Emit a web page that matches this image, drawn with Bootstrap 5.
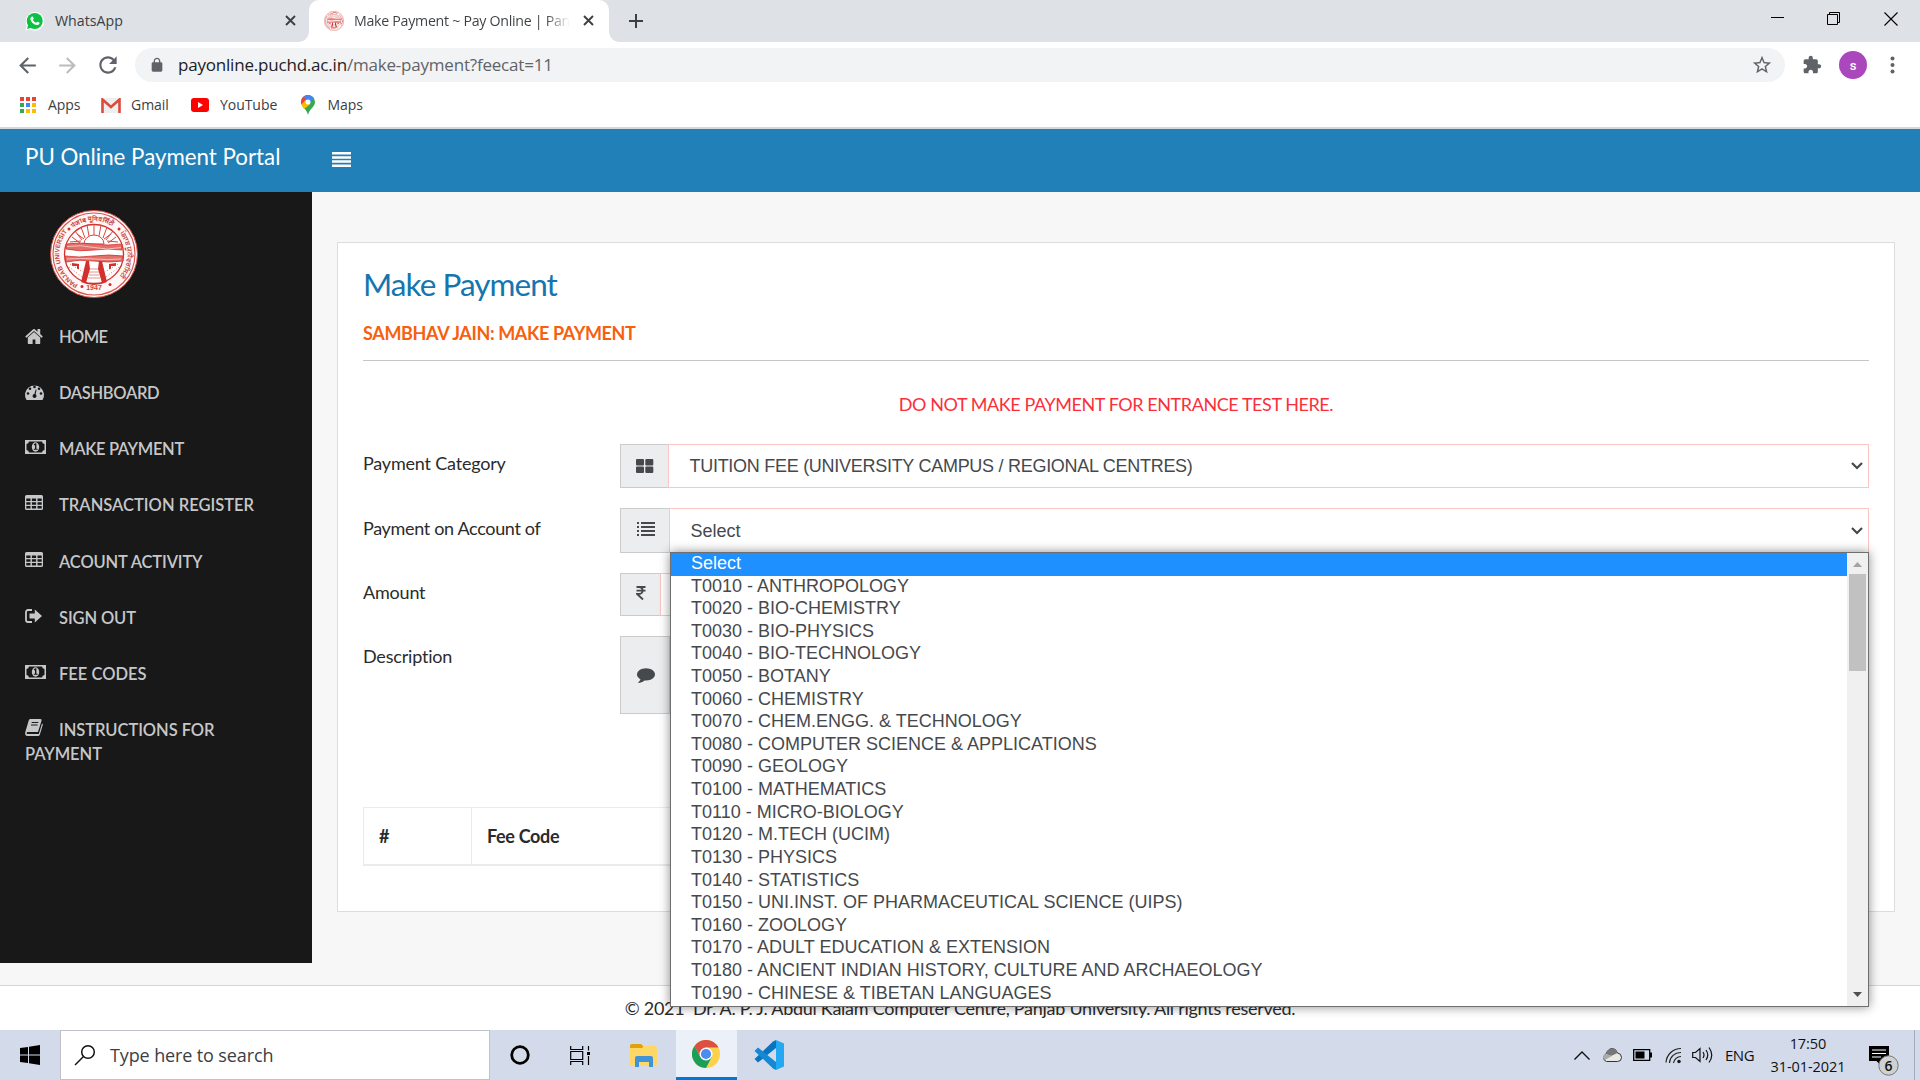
<!DOCTYPE html>
<html lang="en">
<head>
<meta charset="utf-8">
<title>Make Payment ~ Pay Online | Panjab University</title>
<link href="https://cdn.jsdelivr.net/npm/bootstrap@5.3.0/dist/css/bootstrap.min.css" rel="stylesheet">
<style>
html,body{width:1920px;height:1080px;overflow:hidden}
body{font-family:Lato,"Liberation Sans",sans-serif;font-size:18px;line-height:26px;color:#2b2b2b;background:#fff}
svg{display:block;flex:none}
.ui{font-family:"Open Sans","Noto Sans",sans-serif;color:#3c4043;white-space:nowrap}
.tabstrip{height:42px;background:#dee1e6}
.tab-idle{width:309px;padding:0 0 1px 25px;font-size:14.2px;letter-spacing:0}
.tab-live{width:300px;background:#fff;border-radius:10px 10px 0 0;padding:0 0 1px 15px;font-size:14.2px;letter-spacing:-.28px;position:relative}
.tab-live::before,.tab-live::after{content:"";position:absolute;bottom:0;width:10px;height:10px}
.tab-live::before{left:-10px;background:radial-gradient(circle at 0 0,transparent 9.5px,#fff 10px)}
.tab-live::after{right:-10px;background:radial-gradient(circle at 100% 0,transparent 9.5px,#fff 10px)}
.tab-title{width:218px;overflow:hidden;background:linear-gradient(90deg,#3c4043 88%,transparent 99%);-webkit-background-clip:text;background-clip:text;color:transparent}
.winctl{width:57px}
.toolbar{height:44px;padding-top:2px}
.omni{width:1650px;height:34px;border-radius:17px;background:#f1f3f4;font-size:17px;letter-spacing:-.2px;color:#5f6368;padding:0 12px 0 12px}
.omni b{font-weight:400;color:#202124}
.marks{height:43px;border-bottom:2px solid #d5d7da;font-size:14px;letter-spacing:-.05px;padding-bottom:3px}
.avatar{width:28px;height:28px;background:#ab47bc;color:#fff;font:500 13px Roboto,sans-serif}
.topbar{height:63px;background:#2180b8;color:#fff;padding:0 0 7px 25px}
.brand{width:307px;font-size:22.3px}
.mainrow{height:793px;background:#f7f7f7}
.side{width:312px;height:771px;background:#181818;padding-top:18px}
.seal{margin-left:50px;margin-bottom:26.5px}
.side a{display:block;color:#c6c7c9;text-decoration:none;font:600 16.5px/24px Lato,sans-serif;padding:0 25px;margin-bottom:32.25px;white-space:normal}
.side a svg{display:inline-block;vertical-align:-1px;margin-right:16px;fill:#c6c7c9;overflow:visible}
.side a:last-child{margin:0}
.side .tight{letter-spacing:-.33px}
.panel{width:1558px;height:670px;margin:50px 0 0 25px;border:1px solid #ddd;background:#fff;padding:21px 25px 0}
.panel h1{font-size:31.5px;line-height:40px;color:#1576ae;margin:0 0 18px;letter-spacing:-.95px;font-weight:400}
.panel h2{font-size:18px;line-height:22px;font-weight:700;color:#f6600f;margin:0;letter-spacing:-.36px}
.rule{border-top:1px solid #c6c6c6;margin-top:16px}
.warn{color:#fb2f3b;margin:30px 0 27px;letter-spacing:-.43px}
.lab{width:257px;padding-top:6px;letter-spacing:-.2px}
.frm{margin-bottom:20px}
.addon{border:1px solid #c9cbcd;background:#ecedef;width:49px;justify-content:center;padding-left:1px}
.fld{border:1px solid #fbc4c5;margin-left:-1px;font:18px "Liberation Sans",sans-serif;color:#46494c;padding:0 5px 0 20.5px;background:#fff}
.menu-pop{position:absolute;left:50px;top:44px;width:1199px;height:455px;border:1px solid #6f6f6f;background:#fff;box-shadow:0 0 10px rgba(0,0,0,.45);z-index:5;font:18px/22.6px "Liberation Sans",sans-serif;color:#46494c}
.menu-pop ul{margin:0;padding:0;list-style:none}
.menu-pop li{padding-left:20px;height:22.62px;line-height:20px;white-space:nowrap}
.menu-pop li.on{background:#1e90ff;color:#fff}
.sbar{width:21px;background:#f0f0f0}
.thumb{width:17px;height:97px;background:#c1c1c1}
.fees{border:1px solid #ebebeb;border-bottom-width:2px;height:59px;margin-top:93px;padding-bottom:1px;font-weight:700;letter-spacing:-.33px}
.fees .num{width:108px;height:58px;padding-left:15px;border-right:1px solid #ebebeb}
.foot{height:45px;border-top:1px solid #d3d5e2;background:#fff;padding-top:9px;letter-spacing:-.27px}
.taskbar{height:50px;background:#d3dbeb}
.find{width:430px;height:50px;background:#fff;border:1px solid #bfc2c8;font-size:18px;letter-spacing:-.12px;padding-left:13px}
.tile{width:60px}
.tile.on{background:#ecf0f8;border-bottom:3px solid #0078d7}
.tray{color:#111;font-size:15px}
</style>
</head>
<body class="d-flex flex-column">
<svg width="0" height="0" class="position-absolute"><defs>
<symbol id="cash" viewBox="0 0 21 14"><path fill-rule="evenodd" d="M0 0h21v14H0zM4 1.500A2.700 2.700 0 0 1 1.500 4v6A2.700 2.700 0 0 1 4 12.500h13A2.700 2.700 0 0 1 19.500 10V4A2.700 2.700 0 0 1 17 1.500z"/><ellipse cx="10.500" cy="7" rx="3.700" ry="4.700"/><path fill="#181818" d="M8.700 4.600l1.600-1.300h1.100v5.500h1.200v1H8.800v-1h1.200V5l-.7.600z"/></symbol>
<symbol id="grid" viewBox="0 0 18 15"><path fill-rule="evenodd" d="M1.500 0h15A1.500 1.500 0 0 1 18 1.500v12a1.500 1.500 0 0 1-1.500 1.500h-15A1.500 1.500 0 0 1 0 13.500v-12A1.500 1.500 0 0 1 1.500 0zM1.300 3.500v2.500h4.200V3.500zm5.600 0v2.500h4.200V3.500zm5.600 0v2.500h4.200V3.500zM1.300 7.300v2.500h4.200V7.300zm5.600 0v2.500h4.200V7.300zm5.600 0v2.500h4.200V7.300zM1.300 11.100v2.500h4.200v-2.500zm5.600 0v2.500h4.200v-2.500zm5.600 0v2.500h4.200v-2.500z"/></symbol>
<symbol id="cross" viewBox="0 0 11 11"><path d="M1 1l9 9M10 1l-9 9" stroke="#3c4043" stroke-width="1.900"/></symbol>
<symbol id="seal" viewBox="0 0 88 88">
<circle cx="44" cy="44" r="43.500" fill="#fff6f5" stroke="#cf4a45"/><circle cx="44" cy="44" r="41" fill="none" stroke="#d9534e" stroke-width="1.100"/><circle cx="44" cy="44" r="29.500" fill="#fff" stroke="#d3302b" stroke-width="1.300"/>
<g stroke="#d9453f" stroke-width="1" fill="none"><path d="M30 33l-8-6M32 30l-7-9M35 28l-4-11M39 26l-2-11M44 25V14M49 26l2-11M53 28l4-11M56 30l7-9M58 33l8-6M31 31l-11 1M57 31l11 1M34 29l-7-5M54 29l7-5"/></g>
<path d="M34 34a10 9 0 0 1 20 0z" fill="#fff" stroke="#d9453f"/>
<path d="M16 34q14-2 28 0t28 0v6q-14-2-28 0t-28-1zM15 46q14 2 29 0t29 0v5q-14 2-29 0t-28 1z" fill="#e2706b" stroke="#d3302b" stroke-width=".8"/><path d="M17 36.500q14-2 27 1t27 0M17 49q14-1 27 0t27 0" stroke="#f7c0bd" fill="none"/>
<path d="M36 51h3l1 8-4 14h16l-4-14 1-8h3l5 21q-13 6-26 0zM22 53l7 1v5h-2v-3h-5zM66 53l-7 1v5h2v-3h5z" fill="#d3302b"/><path d="M40 59h8M39 62h10M39 65h10M38 68h12" stroke="#dd8a85" stroke-width=".9"/><path d="M19 57l13 10M20 54l13 8M24 65l8 7M69 57l-13 10M68 54l-13 8M64 65l-8 7" stroke="#d9706b" stroke-dasharray="1 2"/>
<g font-family="Liberation Sans,sans-serif" font-weight="700" fill="#c8433e"><text x="44" y="80" font-size="7" text-anchor="middle">1947</text><text font-size="6.400"><textPath href="#ringL">PANJAB UNIVERSITY</textPath></text><text font-size="6.500"><textPath href="#ringT">पंजाब यूनिवर्सिटी</textPath></text><text font-size="6.500"><textPath href="#ringR">ਪੰਜਾਬ ਯੂਨੀਵਰਸਿਟੀ</textPath></text></g>
<circle cx="19" cy="19" r="1.500" fill="#d3302b"/><circle cx="69" cy="19" r="1.500" fill="#d3302b"/><circle cx="32" cy="76.500" r="1.500" fill="#d3302b"/><circle cx="60" cy="74.500" r="1.500" fill="#d3302b"/>
</symbol>
<path id="ringL" d="M28 74.500A34.500 34.500 0 0 1 17 22"/><path id="ringT" d="M23 18A33.500 33.500 0 0 1 66 19"/><path id="ringR" d="M70 23A34.500 34.500 0 0 1 64 72"/>
</defs></svg>

<header class="ui">
<div class="tabstrip d-flex">
 <div class="tab-idle d-flex align-items-center">
  <svg width="19" height="20" viewBox="0 0 19 20"><path d="M.4 19.500l1.300-4.900A9.300 9.300 0 1 1 5 18.200z" fill="#fff"/><circle cx="9.700" cy="10" r="8" fill="#0dc143"/><path d="M2 18l1.300-4.500 3.200 3.200z" fill="#0dc143"/><path d="M6.600 5.800c.6-.6 1.100-.4 1.300 0l.8 1.700c.1.500-.8 1.100-.7 1.400.7 1.400 1.700 2.200 3 2.800.5.100 1-1.100 1.500-1l1.800.9c.7.500-.2 2.500-2.100 2.500-3.500-.3-6.500-3.500-6.800-6.100 0-1 .5-1.600 1.200-2.200z" fill="#fff"/></svg>
  <span style="margin-left:11px">WhatsApp</span><svg class="ms-auto" width="11" height="11" style="margin-right:13.5px"><use href="#cross"/></svg>
 </div>
 <div class="tab-live d-flex align-items-center">
  <svg width="20" height="20"><use href="#seal"/></svg><span class="tab-title" style="margin-left:10px">Make Payment ~ Pay Online | Panjab</span><svg width="11" height="11" style="margin-left:11px"><use href="#cross"/></svg>
 </div>
 <svg style="margin:13px 0 0 19px" width="16" height="16"><path d="M8 1v14M1 8h14" stroke="#3c4043" stroke-width="2"/></svg>
 <div class="d-flex ms-auto" style="padding:0 1px 5px 0">
  <div class="winctl d-flex align-items-center justify-content-center"><svg width="14" height="14"><path d="M1 5.500h13" stroke="#000"/></svg></div>
  <div class="winctl d-flex align-items-center justify-content-center"><svg width="14" height="14" fill="none" stroke="#000"><path d="M.5 2.500h10v10H.5zM2.500 2.500v-2h10v10h-2"/></svg></div>
  <div class="winctl d-flex align-items-center justify-content-center"><svg width="14" height="14"><path d="M.5.500l13 13M13.500.500l-13 13" stroke="#000" stroke-width="1.100"/></svg></div>
 </div>
</div>
<div class="toolbar d-flex align-items-center">
 <svg style="margin-left:15px" width="25" height="25" viewBox="0 0 24 24" fill="#5f6368"><path d="M20 11H7.830l5.590-5.590L12 4l-8 8 8 8 1.410-1.410L7.830 13H20z"/></svg>
 <svg style="margin-left:15px" width="25" height="25" viewBox="0 0 24 24" fill="#babcbe"><path d="M4 11h12.170l-5.590-5.590L12 4l8 8-8 8-1.410-1.410L16.170 13H4z"/></svg>
 <svg style="margin-left:15px;margin-right:14px" width="26" height="26" viewBox="0 0 24 24" fill="#5f6368"><path d="M17.650 6.350C16.200 4.900 14.210 4 12 4c-4.420 0-7.990 3.580-7.990 8s3.570 8 7.990 8c3.730 0 6.840-2.550 7.730-6h-2.080c-.82 2.330-3.040 4-5.650 4-3.310 0-6-2.690-6-6s2.690-6 6-6c1.660 0 3.140.69 4.220 1.780L13 11h7V4l-2.350 2.350z"/></svg>
 <div class="omni d-flex align-items-center">
  <svg width="20" height="16" viewBox="0 0 24 24" fill="#5f6368"><path d="M18 8h-1V6c0-2.760-2.240-5-5-5S7 3.240 7 6v2H6c-1.100 0-2 .9-2 2v10c0 1.100.9 2 2 2h12c1.100 0 2-.9 2-2V10c0-1.100-.9-2-2-2zm-9-2c0-1.660 1.340-3 3-3s3 1.340 3 3v2H9V6z"/></svg>
  <span style="margin:0 0 1px 11px"><b>payonline.puchd.ac.in</b>/make-payment?feecat=11</span>
  <svg class="ms-auto" width="22" height="22" viewBox="0 0 24 24" fill="#5f6368"><path d="M22 9.240l-7.190-.62L12 2 9.190 8.630 2 9.240l5.460 4.730L5.820 21 12 17.270 18.180 21l-1.630-7.030L22 9.240zM12 15.400l-3.760 2.270 1-4.280-3.320-2.880 4.380-.38L12 6.100l1.710 4.040 4.380.38-3.320 2.880 1 4.280L12 15.400z"/></svg>
 </div>
 <svg style="margin-left:17px" width="20" height="20" viewBox="0 0 24 24" fill="#5f6368"><path d="M20.500 11H19V7c0-1.100-.9-2-2-2h-4V3.500C13 2.120 11.880 1 10.500 1S8 2.120 8 3.500V5H4c-1.100 0-1.990.9-1.990 2v3.800H3.500c1.490 0 2.700 1.210 2.700 2.700s-1.210 2.700-2.700 2.700H2V20c0 1.100.9 2 2 2h3.800v-1.500c0-1.490 1.210-2.700 2.700-2.700 1.490 0 2.700 1.210 2.700 2.700V22H17c1.100 0 2-.9 2-2v-4h1.500c1.380 0 2.500-1.120 2.500-2.500S21.880 11 20.500 11z"/></svg>
 <div class="avatar rounded-circle d-flex align-items-center justify-content-center" style="margin-left:17px">s</div>
 <svg style="margin-left:23px" width="6" height="18" fill="#5f6368"><circle cx="2.500" cy="2.500" r="2"/><circle cx="2.500" cy="9" r="2"/><circle cx="2.500" cy="15.500" r="2"/></svg>
</div>
<div class="marks d-flex align-items-center">
 <svg style="margin-left:20px" width="17" height="17"><path d="M0 0h4v4H0zM6 0h4v4H6zM12 0h4v4h-4z" fill="#ea4335"/><path d="M0 6h4v4H0zM0 12h4v4H0z" fill="#34a853"/><path d="M6 6h4v4H6z" fill="#4285f4"/><path d="M12 6h4v4h-4zM6 12h4v4H6zM12 12h4v4h-4z" fill="#fbbc04"/></svg>
 <span style="margin-left:11px;width:53px">Apps</span>
 <svg width="20" height="15"><path d="M1 0h18v15H1z" fill="#eee"/><path d="M1.500 15V1.500L10 9l8.500-7.500V15" fill="none" stroke="#dd4b3e" stroke-width="2.600"/></svg>
 <span style="margin-left:10px;width:60px">Gmail</span>
 <svg width="18" height="14"><rect width="18" height="14" rx="3" fill="#f00"/><path d="M7 4l5 3-5 3z" fill="#fff"/></svg>
 <span style="margin-left:11px;width:81px">YouTube</span>
 <svg width="14" height="20" viewBox="0 0 14 20"><path d="M7 20C6 14 0 12 0 7a7 7 0 0 1 14 0c0 5-6 7-7 13z" fill="#34a853"/><path d="M.5 9.500L11 2l-4-2A7 7 0 0 0 0 7z" fill="#ea4335"/><path d="M2.500 2A7 7 0 0 1 13 3.300L8 8z" fill="#4285f4"/><path d="M.4 9.500L5 4.500l4 5L3 14z" fill="#fbbc04"/><circle cx="7" cy="7" r="2.500" fill="#fff"/></svg>
 <span style="margin-left:12.5px">Maps</span>
</div>
</header>

<nav class="topbar d-flex align-items-center"><span class="brand">PU Online Payment Portal</span>
<svg width="19" height="15" fill="#fff" class="mt-1"><path d="M0 0h19v2.500H0zM0 4.200h19v2.500H0zM0 8.300h19v2.500H0zM0 12.500h19V15H0z"/></svg></nav>

<div class="mainrow d-flex align-items-start">
<aside class="side">
 <svg class="seal" width="88" height="88"><use href="#seal"/></svg>
 <a href="#" style="letter-spacing:-.65px"><svg width="18" height="15" viewBox="60 256 1670 1290" preserveAspectRatio="none"><path d="M1472 992v480q0 26-19 45t-45 19h-384v-384h-256v384h-384q-26 0-45-19t-19-45v-480q0-1 .5-3t.5-3l575-474 575 474q1 2 1 6zm223-69l-62 74q-8 9-21 11h-3q-13 0-21-7l-692-577-692 577q-12 8-24 7-13-2-21-11l-62-74q-8-10-7-23.500t11-21.500l719-599q32-26 76-26t76 26l244 204v-195q0-14 9-23t23-9h192q14 0 23 9t9 23v408l219 182q10 8 11 21.500t-7 23.500z"/></svg>HOME</a>
 <a href="#" class="tight"><svg width="19" height="16" viewBox="0 0 19 16" style="margin-right:15px"><path d="M1.500 16A9.500 9.500 0 1 1 17.500 16z"/><g fill="#181818"><circle cx="3" cy="9.500" r="1.300"/><circle cx="5" cy="4.800" r="1.300"/><circle cx="9.500" cy="2.900" r="1.300"/><circle cx="14" cy="4.800" r="1.300"/><circle cx="16" cy="9.500" r="1.300"/><path d="M10.700 5.500l.9.300-1 4.500a2 2 0 1 1-1.200-.3z"/></g></svg>DASHBOARD</a>
 <a href="#" class="tight"><svg width="21" height="14" style="margin-right:13px;vertical-align:1px"><use href="#cash"/></svg>MAKE PAYMENT</a>
 <a href="#"><svg width="18" height="15" style="vertical-align:1px"><use href="#grid"/></svg>TRANSACTION REGISTER</a>
 <a href="#" style="letter-spacing:-.15px"><svg width="18" height="15" style="vertical-align:1px"><use href="#grid"/></svg>ACOUNT ACTIVITY</a>
 <a href="#" style="letter-spacing:-.12px"><svg width="17" height="14" style="margin-right:17px;vertical-align:1px"><path d="M7 1H3a2 2 0 0 0-2 2v8a2 2 0 0 0 2 2h4" fill="none" stroke="#c6c7c9" stroke-width="1.800"/><path d="M4.500 4.500h5.300V.6L17 7l-7.200 6.400V9.500H4.500z"/></svg>SIGN OUT</a>
 <a href="#"><svg width="21" height="14" style="margin-right:13px;vertical-align:1px"><use href="#cash"/></svg>FEE CODES</a>
 <a href="#" style="letter-spacing:-.06px"><svg width="18" height="17" style="vertical-align:0"><path d="M5.500 0h10q1.500.2 1 1.800L13 13H3q-1.300 0-1.400.9c0 .9.600 1.100 1.400 1.100h10.800L17 4.500q1 .3.800 1.300l-3 9.900Q14.300 17 13 17H2.500Q-.6 16.700.3 13L3.800 1.300Q4.300 0 5.500 0z"/><path d="M6.700 3.500h6.600M6 6h6.600" stroke="#181818"/></svg>INSTRUCTIONS FOR PAYMENT</a>
</aside>
<main class="panel">
 <h1>Make Payment</h1>
 <h2>SAMBHAV JAIN: MAKE PAYMENT</h2>
 <div class="rule"></div>
 <p class="warn text-center">DO NOT MAKE PAYMENT FOR ENTRANCE TEST HERE.</p>
 <div class="frm d-flex"><div class="lab">Payment Category</div>
  <div class="d-flex flex-fill" style="height:44px"><div class="addon d-flex align-items-center"><svg width="18" height="14" fill="#46494c"><rect width="8" height="6.400" rx="1"/><rect x="9.300" width="8" height="6.400" rx="1"/><rect y="7.600" width="8" height="6.400" rx="1"/><rect x="9.300" y="7.600" width="8" height="6.400" rx="1"/></svg></div>
  <div class="fld flex-fill d-flex align-items-center justify-content-between"><span style="letter-spacing:-.28px">TUITION FEE (UNIVERSITY CAMPUS / REGIONAL CENTRES)</span><svg width="12" height="8"><path d="M1 1l5 5 5-5" fill="none" stroke="#46494c" stroke-width="2.200"/></svg></div></div></div>
 <div class="frm d-flex"><div class="lab" style="padding-top:7px;letter-spacing:-.33px">Payment on Account of</div>
  <div class="d-flex flex-fill position-relative" style="height:45px"><div class="addon d-flex align-items-center" style="width:50px;padding-bottom:3px"><svg width="18" height="14" fill="#46494c"><path d="M0 0h2v2H0zM4 0h14v2H4zM0 4h2v2H0zM4 4h14v2H4zM0 8h2v2H0zM4 8h14v2H4zM0 12h2v2H0zM4 12h14v2H4z"/></svg></div>
  <div class="fld flex-fill d-flex align-items-center justify-content-between"><span class="pt-1" style="margin-top:-2px">Select</span><svg width="12" height="8"><path d="M1 1l5 5 5-5" fill="none" stroke="#46494c" stroke-width="2.200"/></svg></div>
  <div class="menu-pop d-flex"><ul class="flex-fill">
   <li class="on">Select</li><li>T0010 - ANTHROPOLOGY</li><li>T0020 - BIO-CHEMISTRY</li><li>T0030 - BIO-PHYSICS</li><li>T0040 - BIO-TECHNOLOGY</li><li>T0050 - BOTANY</li><li>T0060 - CHEMISTRY</li><li>T0070 - CHEM.ENGG. &amp; TECHNOLOGY</li><li>T0080 - COMPUTER SCIENCE &amp; APPLICATIONS</li><li>T0090 - GEOLOGY</li><li>T0100 - MATHEMATICS</li><li>T0110 - MICRO-BIOLOGY</li><li>T0120 - M.TECH (UCIM)</li><li>T0130 - PHYSICS</li><li>T0140 - STATISTICS</li><li>T0150 - UNI.INST. OF PHARMACEUTICAL SCIENCE (UIPS)</li><li>T0160 - ZOOLOGY</li><li>T0170 - ADULT EDUCATION &amp; EXTENSION</li><li>T0180 - ANCIENT INDIAN HISTORY, CULTURE AND ARCHAEOLOGY</li><li>T0190 - CHINESE &amp; TIBETAN LANGUAGES</li></ul>
   <div class="sbar d-flex flex-column align-items-center"><svg width="9" height="5" style="margin:9px 0 7px"><path d="M0 5l4.500-5L9 5z" fill="#a3a3a3"/></svg><div class="thumb"></div><svg class="mt-auto" width="9" height="5" style="margin-bottom:9px"><path d="M0 0l4.500 5L9 0z" fill="#505050"/></svg></div>
  </div></div></div>
 <div class="frm d-flex"><div class="lab">Amount</div>
  <div class="d-flex flex-fill" style="height:43px"><div class="addon d-flex align-items-center" style="width:41px;padding-bottom:3px"><svg width="10" height="14"><path d="M.5 1h9M.5 4.600h9M.5 1h2.500c4.800 0 4.800 7 0 7H1l6 5.500" fill="none" stroke="#46494c" stroke-width="1.900"/></svg></div><div class="fld flex-fill"></div></div></div>
 <div class="d-flex"><div class="lab" style="padding-top:7px">Description</div>
  <div class="d-flex flex-fill" style="height:78px"><div class="addon d-flex align-items-center" style="width:50px"><svg width="18" height="16" viewBox="0 128 1792 1664" fill="#46494c" preserveAspectRatio="none"><path d="M1792 896q0 174-120 321.500t-326 233-450 85.500q-70 0-145-8-198 175-460 242-49 14-114 22-17 2-30.500-9t-17.500-29v-1q-3-4-.5-12t2-10 4.500-9.500l6-9 7-8.500 8-9q7-8 31-34.500t34.500-38 31-39.500 32.500-51 27-59 26-76q-157-89-247.500-220t-90.500-281q0-130 71-248.500t191-204.500 286-136.500 348-50.500 348 50.500 286 136.500 191 204.500 71 248.500z"/></svg></div><div class="fld flex-fill"></div></div></div>
 <div class="fees d-flex align-items-center"><div class="num d-flex align-items-center">#</div><div style="padding-left:15px">Fee Code</div></div>
</main>
</div>
<footer class="foot text-center">© 2021 &nbsp;Dr. A. P. J. Abdul Kalam Computer Centre, Panjab University. All rights reserved.</footer>

<div class="taskbar ui d-flex">
 <div class="tile d-flex align-items-center justify-content-center"><svg width="20" height="20"><path d="M0 3l8-1.100v7.600H0zM9 1.700L20 0v9.500H9zM0 10.500h8v7.600L0 17zM9 10.500h11V20L9 18.300z"/></svg></div>
 <div class="find d-flex align-items-center"><svg width="22" height="22" fill="none" stroke="#111" stroke-width="1.500"><circle cx="14" cy="8" r="6.300"/><path d="M9.500 12.500L1 21"/></svg><span style="margin-left:14px">Type here to search</span></div>
 <div class="tile d-flex align-items-center justify-content-center"><svg width="20" height="20"><circle cx="10" cy="10" r="8.300" fill="none" stroke="#000" stroke-width="2.800"/></svg></div>
 <div class="tile d-flex align-items-center justify-content-center"><svg width="20" height="19" fill="none" stroke="#000" stroke-width="1.200"><path d="M.7 0v3.500h12V0M.7 19v-3.500h12V19M.7 5.500h12v8H.7zM18.500 0v4.500M18.500 10v9"/><path d="M17 6h3v3h-3z" fill="#000" stroke="none"/></svg></div>
 <div class="tile d-flex align-items-center justify-content-center" style="padding-left:7px"><svg width="27" height="23"><path d="M0 2q0-2 2-2h9l2 2v3H0z" fill="#e3a008"/><path d="M0 4h12l2-2h11q2 0 2 2v18H0z" fill="#ffd767"/><path d="M5 23V14q0-2 2-2h14q2 0 2 2v9h-4v-5H9v5z" fill="#3f93d6"/></svg></div>
 <div class="tile on d-flex align-items-center justify-content-center" style="margin-left:6px;width:61px;padding-right:2px"><svg width="28" height="28" viewBox="-14 -14 28 28"><circle r="14" fill="#fdd14b"/><path d="M0-6.500L-5.600 3.200-11.500-8A14 14 0 0 1 12.500-6.500z" fill="#dd4f43"/><path d="M-11.500-8A14 14 0 0 0 0 14l5.600-10.800L0 0l-5.600 3.200z" fill="#1a9f5b"/><circle r="6.500" fill="#fff"/><circle r="5.100" fill="#4b8bf4"/></svg></div>
 <div class="tile d-flex align-items-center justify-content-center ps-1"><svg width="30" height="30" viewBox="0 0 30 30"><path d="M22 0l8 3.500v23L22 30z" fill="#24a8f2"/><path d="M22 0v8L4 22.500l-3.500-3.500L19 1.500z" fill="#0a74be"/><path d="M22 30v-8L4 7.500.500 11 19 28.500z" fill="#138ad3"/></svg></div>
 <div class="tray d-flex align-items-center ms-auto">
  <svg width="16" height="9"><path d="M.5 8.500L8 1l7.500 7.500" fill="none" stroke="#111" stroke-width="1.400"/></svg>
  <svg style="margin-left:12px" width="20" height="14"><path d="M4.500 13.500a4 4 0 0 1-.5-7.500Q6 .5 10.500.5 14 .5 15.500 5q4 .5 4 4.500 0 4-4 4z" fill="#e9e9e6" stroke="#333"/><path d="M4 6Q6 .5 10.500.5 14 .5 15.500 5L9 8z" fill="#777"/><path d="M1 10a4 4 0 0 1 3-4l6 2-7 4z" fill="#aaa"/></svg>
  <svg style="margin-left:11px" width="19" height="12"><path d="M.7.7h16v10.600H.7z" fill="none" stroke="#000" stroke-width="1.300"/><path d="M2.500 2.500h9v7h-9zM17 3.500h2v5h-2z"/></svg>
  <svg style="margin-left:13px" width="17" height="17" fill="none" stroke="#222" stroke-width="1.200"><path d="M1 15.500A15 15 0 0 1 16 1.500M4.500 16A11 11 0 0 1 16 5.500M8.500 16A7.500 7.500 0 0 1 16 9.500"/><circle cx="14" cy="14.500" r="1.200" fill="#000"/></svg>
  <svg style="margin-left:10px" width="21" height="18" fill="none" stroke="#111" stroke-width="1.200"><path d="M.7 6.500h2.800L8 2.500v13L3.500 11.500H.7zM11 6q2 3 0 6M14 4q3.500 5 0 10M17 1.500q5.500 7.500 0 15"/></svg>
  <span style="margin-left:12px;width:28px;letter-spacing:-.5px">ENG</span>
  <div class="text-center" style="margin-left:15px;width:80px;font-size:14.500px;line-height:23px;letter-spacing:-.05px">17:50<br>31-01-2021</div>
  <div class="position-relative" style="margin-left:21px"><svg width="20" height="19"><path d="M0 0h20v15H11v3.500L7.500 15H0z"/><path d="M3 4h14M3 7.500h14M3 11h9" stroke="#fff"/></svg><svg class="position-absolute" style="left:9px;top:9px" width="21" height="21"><circle cx="10.500" cy="10.500" r="9.700" fill="#cfd0d2" stroke="#777"/><text x="10.500" y="15.500" text-anchor="middle" font-size="14" font-weight="600" fill="#111">6</text></svg></div>
  <div style="width:1px;height:50px;background:#a4acbd;margin:0 5px 0 25px"></div>
 </div>
</div>
<script src="https://cdn.jsdelivr.net/npm/bootstrap@5.3.0/dist/js/bootstrap.bundle.min.js"></script>
</body>
</html>
